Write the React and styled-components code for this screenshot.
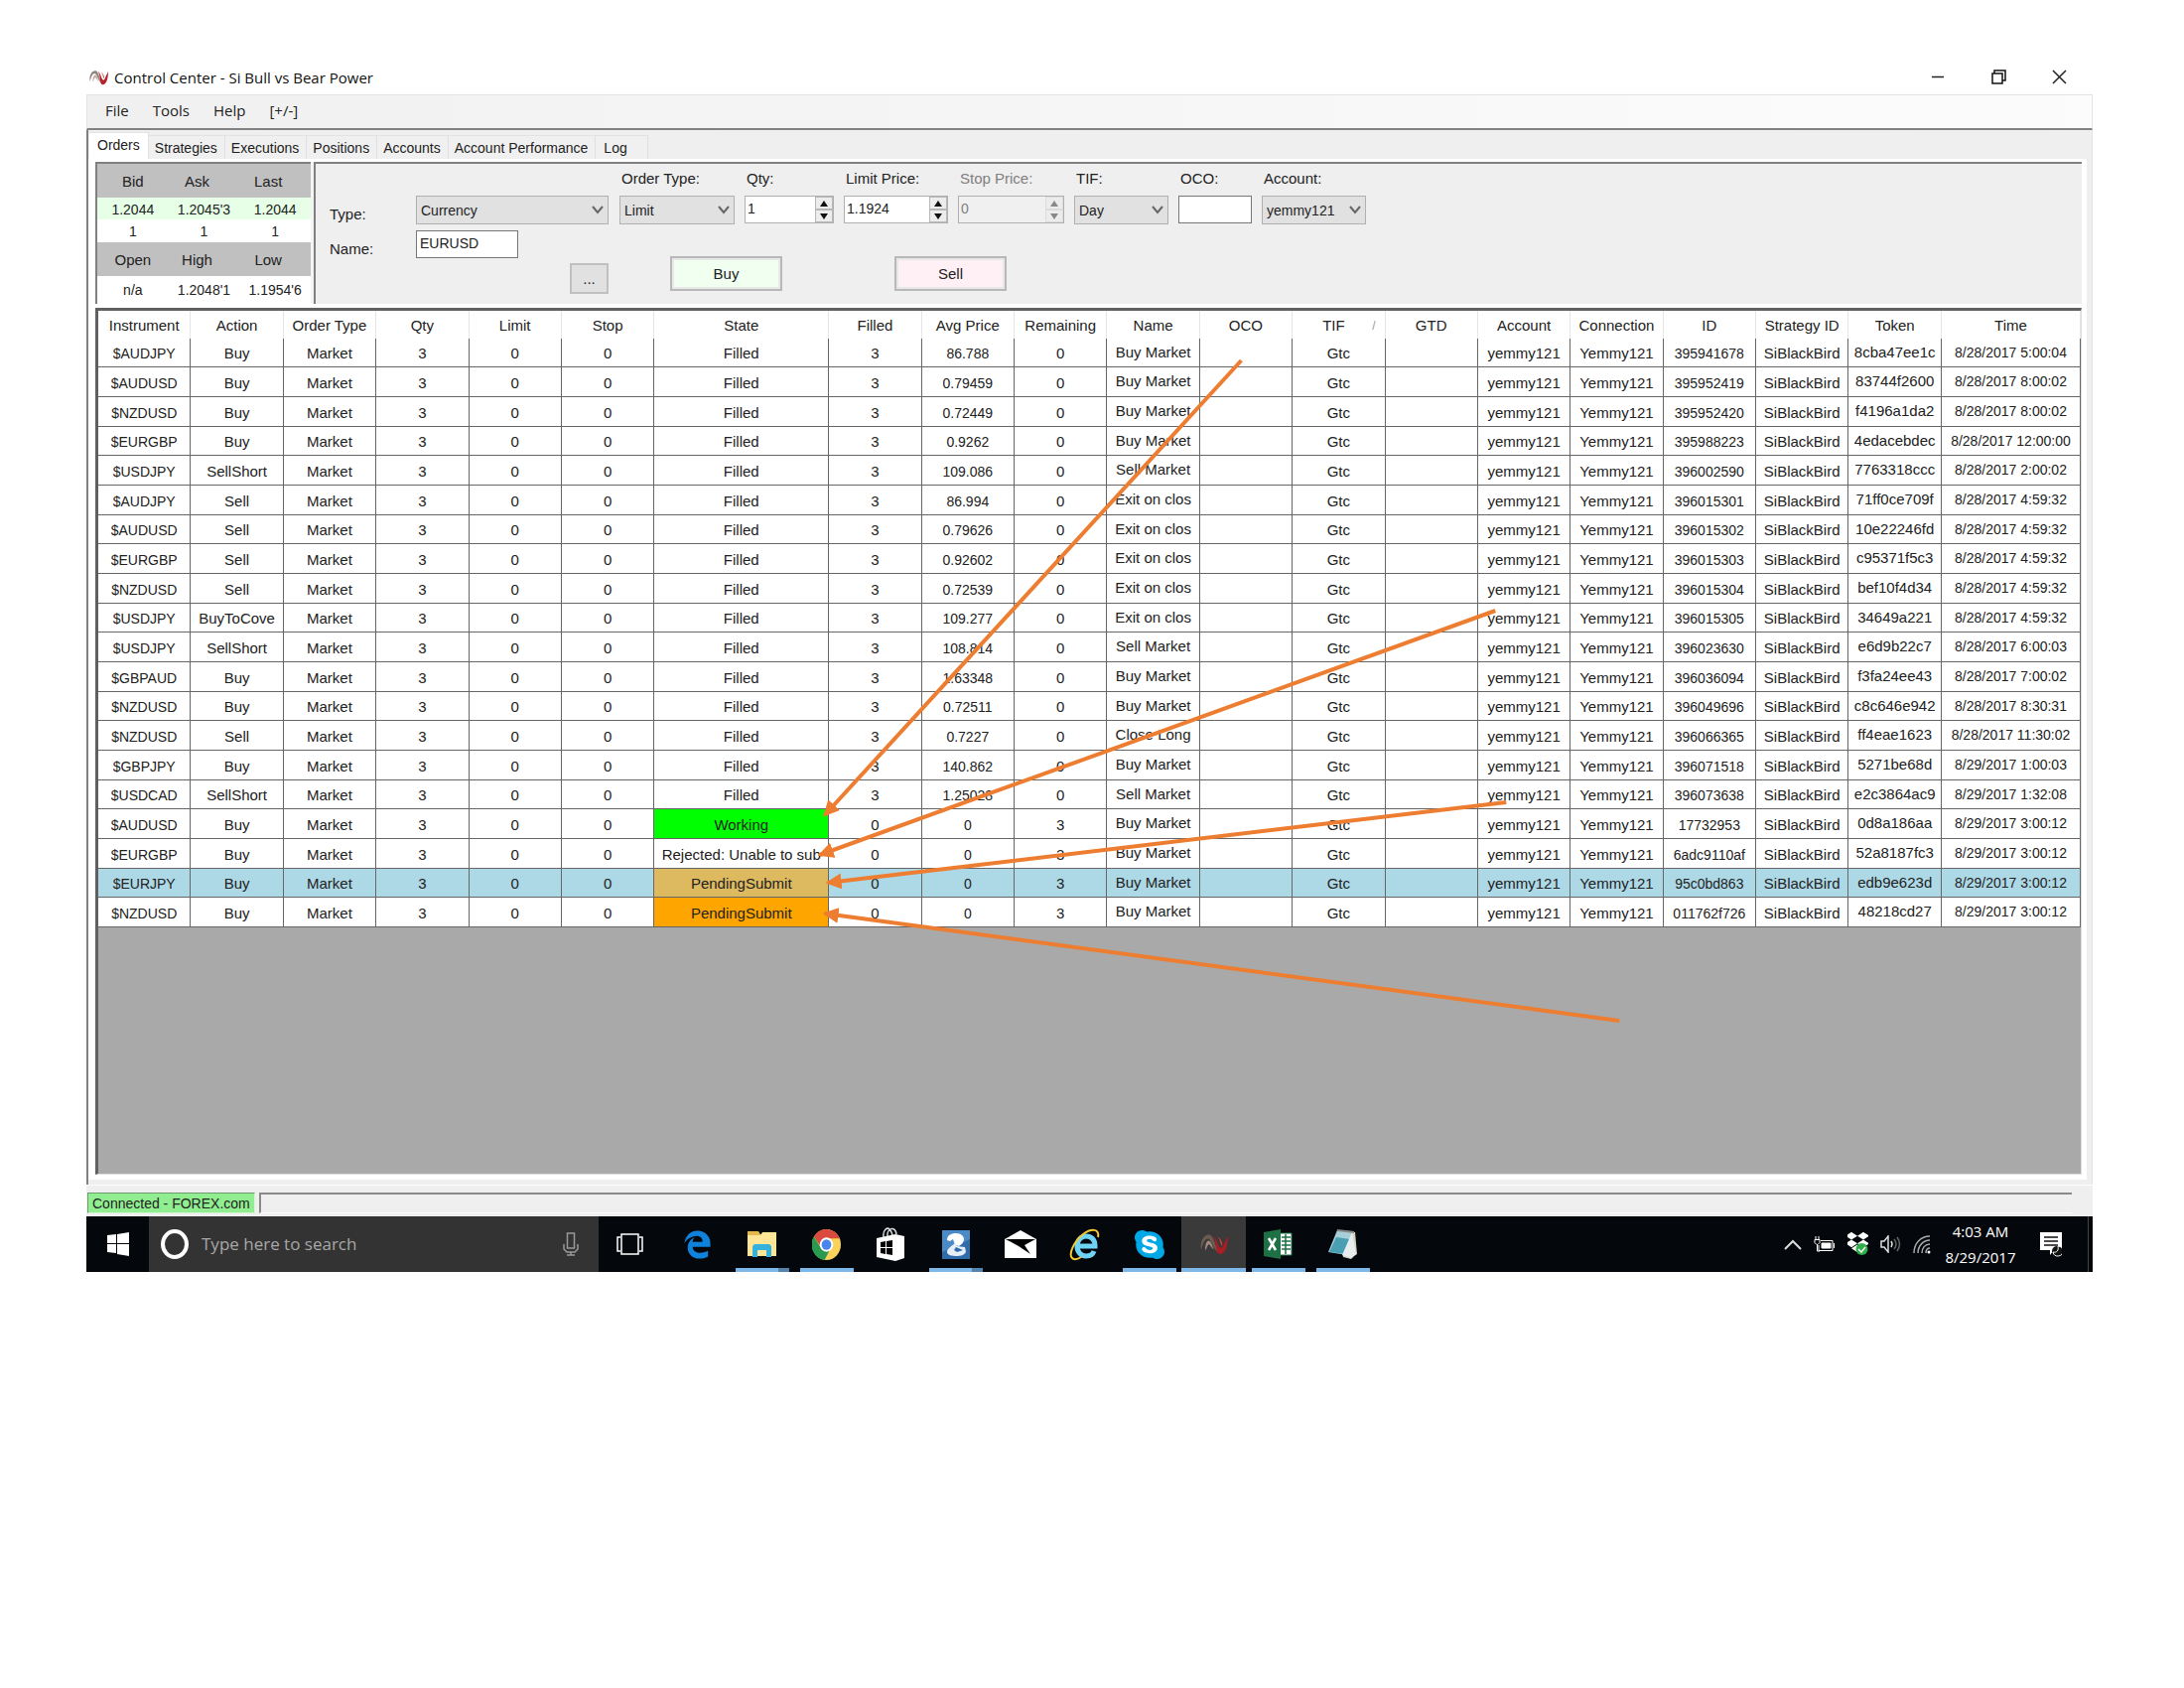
import React from "react";
import styled, { createGlobalStyle } from "styled-components";
import { FaDropbox, FaEdgeLegacy, FaSkype } from "react-icons/fa";

const tabs = ["Orders", "Strategies", "Executions", "Positions", "Accounts", "Account Performance", "Log"];

const columns = [
  "Instrument", "Action", "Order Type", "Qty", "Limit", "Stop", "State", "Filled", "Avg Price", "Remaining",
  "Name", "OCO", "TIF", "GTD", "Account", "Connection", "ID", "Strategy ID", "Token", "Time",
];

// instrument, action, state, filled, avg price, remaining, name, id, token, time
const orders = [
  ["$AUDJPY", "Buy", "Filled", 3, "86.788", 0, "Buy Market", "395941678", "8cba47ee1c", "8/28/2017 5:00:04"],
  ["$AUDUSD", "Buy", "Filled", 3, "0.79459", 0, "Buy Market", "395952419", "83744f2600", "8/28/2017 8:00:02"],
  ["$NZDUSD", "Buy", "Filled", 3, "0.72449", 0, "Buy Market", "395952420", "f4196a1da2", "8/28/2017 8:00:02"],
  ["$EURGBP", "Buy", "Filled", 3, "0.9262", 0, "Buy Market", "395988223", "4edacebdec", "8/28/2017 12:00:00"],
  ["$USDJPY", "SellShort", "Filled", 3, "109.086", 0, "Sell Market", "396002590", "7763318ccc", "8/28/2017 2:00:02"],
  ["$AUDJPY", "Sell", "Filled", 3, "86.994", 0, "Exit on clos", "396015301", "71ff0ce709f", "8/28/2017 4:59:32"],
  ["$AUDUSD", "Sell", "Filled", 3, "0.79626", 0, "Exit on clos", "396015302", "10e22246fd", "8/28/2017 4:59:32"],
  ["$EURGBP", "Sell", "Filled", 3, "0.92602", 0, "Exit on clos", "396015303", "c95371f5c3", "8/28/2017 4:59:32"],
  ["$NZDUSD", "Sell", "Filled", 3, "0.72539", 0, "Exit on clos", "396015304", "bef10f4d34", "8/28/2017 4:59:32"],
  ["$USDJPY", "BuyToCove", "Filled", 3, "109.277", 0, "Exit on clos", "396015305", "34649a221", "8/28/2017 4:59:32"],
  ["$USDJPY", "SellShort", "Filled", 3, "108.814", 0, "Sell Market", "396023630", "e6d9b22c7", "8/28/2017 6:00:03"],
  ["$GBPAUD", "Buy", "Filled", 3, "1.63348", 0, "Buy Market", "396036094", "f3fa24ee43", "8/28/2017 7:00:02"],
  ["$NZDUSD", "Buy", "Filled", 3, "0.72511", 0, "Buy Market", "396049696", "c8c646e942", "8/28/2017 8:30:31"],
  ["$NZDUSD", "Sell", "Filled", 3, "0.7227", 0, "Close Long", "396066365", "ff4eae1623", "8/28/2017 11:30:02"],
  ["$GBPJPY", "Buy", "Filled", 3, "140.862", 0, "Buy Market", "396071518", "5271be68d", "8/29/2017 1:00:03"],
  ["$USDCAD", "SellShort", "Filled", 3, "1.25028", 0, "Sell Market", "396073638", "e2c3864ac9", "8/29/2017 1:32:08"],
  ["$AUDUSD", "Buy", "Working", 0, "0", 3, "Buy Market", "17732953", "0d8a186aa", "8/29/2017 3:00:12"],
  ["$EURGBP", "Buy", "Rejected: Unable to sub", 0, "0", 3, "Buy Market", "6adc9110af", "52a8187fc3", "8/29/2017 3:00:12"],
  ["$EURJPY", "Buy", "PendingSubmit", 0, "0", 3, "Buy Market", "95c0bd863", "edb9e623d", "8/29/2017 3:00:12"],
  ["$NZDUSD", "Buy", "PendingSubmit", 0, "0", 3, "Buy Market", "011762f726", "48218cd27", "8/29/2017 3:00:12"],
];

const SELECTED = 18;

const stateColor = (state, selected) => {
  if (state === "Working") return "#00ff00";
  if (state === "PendingSubmit") return selected ? "#ddb960" : "#ffa500";
  return "transparent";
};

const arrows = [
  [1152, 50, 732, 508],
  [1408, 302, 727, 548],
  [1419, 495, 735, 576],
  [1533, 715, 732, 607],
];

function NinjaLogo({ size, height, dim }) {
  return (
    <svg width={size} height={height} viewBox="0 0 28 24" preserveAspectRatio="none">
      <path d="M1 18C-1 8 5 0 10 2c4 2 5 12 9 20C13 18 11 6 8 6c-4 0-5 6-7 12z" fill={dim ? "#6b5a50" : "#8d8580"} />
      <path d="M5 19C5 9 8 7 10 9c2 2 2 6 4 9C11 16 10 13 9 12c-2 1-2 4-4 7z" fill={dim ? "#a08c7e" : "#c9a9a2"} />
      <path d="M13 3c4 2 5 13 8 13c2 0 3-5 7-13C28 14 25 23 20 23c-5 0-3-13-7-20z" fill={dim ? "#a81e22" : "#b8202a"} />
      <path d="M16 3c4 1 4 10 6 11c1-3-1-7-3-9z" fill={dim ? "#c9403f" : "#d96a6c"} />
    </svg>
  );
}

function Select({ id, value, width }) {
  return (
    <SelectWrap $width={width}>
      <SelectControl id={id} defaultValue={value}>
        <option>{value}</option>
      </SelectControl>
      <Chevron width="12" height="9" viewBox="0 0 12 9">
        <path d="M1 1l5 6 5-6" fill="none" stroke="#666" strokeWidth="2" />
      </Chevron>
    </SelectWrap>
  );
}

function Spinner({ id, value, width, disabled }) {
  return (
    <SpinWrap $width={width} $disabled={disabled}>
      <SpinInput id={id} defaultValue={value} disabled={disabled} />
      <SpinButtons>
        <SpinButton type="button" aria-label="Increase" disabled={disabled}>
          <svg width="8" height="6" viewBox="0 0 8 6"><path d="M4 0l4 6H0z" fill="currentColor" /></svg>
        </SpinButton>
        <SpinButton type="button" aria-label="Decrease" disabled={disabled}>
          <svg width="8" height="6" viewBox="0 0 8 6"><path d="M4 6l4-6H0z" fill="currentColor" /></svg>
        </SpinButton>
      </SpinButtons>
    </SpinWrap>
  );
}

function QuotePanel() {
  return (
    <QuoteTable>
      <tbody>
        <QuoteHead><th>Bid</th><th>Ask</th><th>Last</th></QuoteHead>
        <QuoteRow $live><td>1.2044</td><td>1.2045'3</td><td>1.2044</td></QuoteRow>
        <QuoteRow><td>1</td><td>1</td><td>1</td></QuoteRow>
        <QuoteHead><th>Open</th><th>High</th><th>Low</th></QuoteHead>
        <QuoteRow $tall><td>n/a</td><td>1.2048'1</td><td>1.1954'6</td></QuoteRow>
      </tbody>
    </QuoteTable>
  );
}

function OrderEntry() {
  return (
    <EntryPanel>
      <SymbolForm>
        <SymbolLabel htmlFor="type">Type:</SymbolLabel>
        <Select id="type" value="Currency" width={194} />
        <SymbolLabel htmlFor="name">Name:</SymbolLabel>
        <TextInput id="name" defaultValue="EURUSD" $width={103} />
        <MoreButton type="button">...</MoreButton>
      </SymbolForm>
      <TicketForm>
        <FieldRow>
          <Field><FieldLabel htmlFor="orderType">Order Type:</FieldLabel><Select id="orderType" value="Limit" width={116} /></Field>
          <Field><FieldLabel htmlFor="qty">Qty:</FieldLabel><Spinner id="qty" value="1" width={90} /></Field>
          <Field><FieldLabel htmlFor="limitPrice">Limit Price:</FieldLabel><Spinner id="limitPrice" value="1.1924" width={105} /></Field>
          <Field><FieldLabel htmlFor="stopPrice" $disabled>Stop Price:</FieldLabel><Spinner id="stopPrice" value="0" width={107} disabled /></Field>
          <Field><FieldLabel htmlFor="tif">TIF:</FieldLabel><Select id="tif" value="Day" width={95} /></Field>
          <Field><FieldLabel htmlFor="oco">OCO:</FieldLabel><TextInput id="oco" $width={74} /></Field>
          <Field><FieldLabel htmlFor="account">Account:</FieldLabel><Select id="account" value="yemmy121" width={105} /></Field>
        </FieldRow>
        <TradeButtons>
          <TradeButton type="button" $color="#f0fff0">Buy</TradeButton>
          <TradeButton type="button" $color="#fff0f5">Sell</TradeButton>
        </TradeButtons>
      </TicketForm>
    </EntryPanel>
  );
}

function OrdersGrid() {
  return (
    <GridPane>
      <GridTable>
        <colgroup>
          {columns.map((name) => <GridCol key={name} $name={name} />)}
        </colgroup>
        <thead>
          <tr>
            {columns.map((name) => (
              <HeadCell key={name}>
                {name === "TIF" ? <SortHead><span>TIF</span><SortMark>/</SortMark></SortHead> : name}
              </HeadCell>
            ))}
          </tr>
        </thead>
        <tbody>
          {orders.map((o, i) => {
            const [instrument, action, state, filled, avg, remaining, name, id, token, time] = o;
            const selected = i === SELECTED;
            return (
              <Row key={i} $selected={selected}>
                <Cell $dense>{instrument}</Cell>
                <Cell>{action}</Cell>
                <Cell>Market</Cell>
                <Cell>3</Cell>
                <Cell>0</Cell>
                <Cell>0</Cell>
                <StateCell $color={stateColor(state, selected)}>{state}</StateCell>
                <Cell>{filled}</Cell>
                <Cell $dense>{avg}</Cell>
                <Cell>{remaining}</Cell>
                <Cell $raised>{name}</Cell>
                <Cell />
                <Cell>Gtc</Cell>
                <Cell />
                <Cell>yemmy121</Cell>
                <Cell>Yemmy121</Cell>
                <Cell $dense>{id}</Cell>
                <Cell>SiBlackBird</Cell>
                <Cell $raised>{token}</Cell>
                <Cell $raised $dense>{time}</Cell>
              </Row>
            );
          })}
        </tbody>
      </GridTable>
      <Annotations viewBox="0 0 1998 869" preserveAspectRatio="none">
        <defs>
          <marker id="head" viewBox="0 0 16 16" refX="14" refY="8" markerWidth="16" markerHeight="16" markerUnits="userSpaceOnUse" orient="auto">
            <path d="M0 0l16 8-16 8z" fill="#ed7d31" />
          </marker>
        </defs>
        {arrows.map(([x1, y1, x2, y2]) => (
          <line key={y1} x1={x1} y1={y1} x2={x2} y2={y2} stroke="#ed7d31" strokeWidth="4" markerEnd="url(#head)" />
        ))}
      </Annotations>
    </GridPane>
  );
}

const StoreIcon = () => (
  <svg width="29" height="34" viewBox="0 0 29 34">
    <path d="M7 10C6 2 11 0 13 2s3 4 3 8M11 9C10 1 19-2 20 7" fill="none" stroke="#ddd" strokeWidth="1.5" />
    <path d="M0 11l19-4v27L0 30zM19 7l9 2v22l-9 3z" fill="#fff" />
    <path d="M4 15l5-1v6H4zM10 14l6-1v7h-6zM4 21h5v6l-5-1zM10 21h6v7l-6-1z" fill="#000" />
  </svg>
);

const ExplorerIcon = () => (
  <svg width="29" height="28" viewBox="0 0 29 28">
    <path d="M0 1h11l2 3h16v22H0z" fill="#e3b94c" />
    <path d="M0 5h13l2-3h14v24H0z" fill="#ffe596" />
    <path d="M5 27V16l2-2h15l2 2v11h-5v-7h-9v7z" fill="#35b1de" />
  </svg>
);

const ChromeIcon = () => (
  <svg width="29" height="31" viewBox="0 0 30 30" preserveAspectRatio="none">
    <circle cx="15" cy="15" r="15" fill="#fbd25a" />
    <path d="M15 0a15 15 0 0 1 14 9H15l-6 8L2 7A15 15 0 0 1 15 0z" fill="#db4a3e" />
    <path d="M2 7l7 11 9 3-5 9A15 15 0 0 1 2 7z" fill="#2b9a50" />
    <circle cx="15" cy="15" r="7" fill="#fff" />
    <circle cx="15" cy="15" r="5" fill="#4a86ee" />
  </svg>
);

const ZIcon = () => (
  <svg width="28" height="29" viewBox="0 0 28 29">
    <rect width="28" height="29" fill="#2f6cab" />
    <path d="M0 0h28v9L0 22z" fill="#4a8ac6" />
    <path d="M5 10C5 5 9 3 14 3c5 0 8 3 8 6 0 3-2 5-5 7l-4-1-2-6-3 2z" fill="#fff" />
    <path d="M13 13l2 3 8 1 1 5c-2 3-5 4-9 4-5 0-10-1-10-4 0-4 5-6 8-9z" fill="#e6eef8" />
    <path d="M14 17l7 3-6 2-3-2z" fill="#2f6cab" />
  </svg>
);

const MailIcon = () => (
  <svg width="32" height="28" viewBox="0 0 32 28">
    <path d="M0 9L16 0l16 9v19H0z" fill="#fff" />
    <path d="M1 9h30l-11 6 6 9-12-8z" fill="#000" />
  </svg>
);

const IeIcon = () => (
  <svg width="31" height="33" viewBox="0 0 31 33" fill="none">
    <path d="M9 18h17c0-7-4-10-9-10S8 12 8 18s4 10 9 10c4 0 7-2 8-5" stroke="#6fd3f5" strokeWidth="5" />
    <path d="M29 9c2-9-7-9-15-3C5 13-1 26 3 30c2 2 6 1 9-1" stroke="#f5c931" strokeWidth="2" />
  </svg>
);

const SkypeIcon = () => (
  <svg width="30" height="33" viewBox="0 0 28 32" preserveAspectRatio="none">
    <circle cx="14" cy="16" r="10" fill="#fff" />
    <FaSkype size={32} x="-2" y="0" color="#00a8e6" />
  </svg>
);

const ExcelIcon = () => (
  <svg width="29" height="30" viewBox="0 0 29 30">
    <path d="M16 4h12v22H16z" fill="#fff" stroke="#1e7145" />
    <path d="M18 8h9M18 12h9M18 16h9M18 20h9M22 5v20" stroke="#1e7145" strokeWidth="1.500" />
    <path d="M0 3l17-3v30L0 27z" fill="#1e7145" />
    <path d="M5 9l7 12M12 9L5 21" stroke="#fff" strokeWidth="2.500" />
  </svg>
);

const NotepadIcon = () => (
  <svg width="30" height="30" viewBox="0 0 30 30">
    <path d="M9 1l18 2 2 22-3 2-3 3-8-2z" fill="#d8d2c0" />
    <path d="M9 1l15 1-5 24L0 23z" fill="#a6cfd9" />
    <path d="M8 8l14 2-4 15L1 23z" fill="#4b9fb3" />
    <path d="M24 3l4 22-5 4-9-3z" fill="#e8edee" />
    <path d="M9 1l17 2" stroke="#888" strokeWidth="2" />
  </svg>
);

const taskItems = [
  { name: "Edge", icon: <FaEdgeLegacy size={29} color="#0f82dc" /> },
  { name: "File Explorer", icon: <ExplorerIcon />, open: true, stacked: true },
  { name: "Chrome", icon: <ChromeIcon />, open: true },
  { name: "Store", icon: <StoreIcon /> },
  { name: "Trader", icon: <ZIcon />, open: true, stacked: true },
  { name: "Mail", icon: <MailIcon /> },
  { name: "Internet Explorer", icon: <IeIcon /> },
  { name: "Skype", icon: <SkypeIcon />, open: true },
  { name: "Control Center", icon: <NinjaLogo size={28} height={22} dim />, open: true, active: true },
  { name: "Excel", icon: <ExcelIcon />, open: true },
  { name: "Notepad", icon: <NotepadIcon />, open: true },
];

function Taskbar() {
  return (
    <TaskbarBar>
      <StartButton aria-label="Start">
        <svg width="22" height="24" viewBox="0 0 22 24" fill="#fff">
          <path d="M0 3l9-1v9H0zM10 2l12-2v11H10zM0 12h9v9l-9-1zM10 12h12v12l-12-2z" />
        </svg>
      </StartButton>
      <SearchBox>
        <svg width="30" height="32" viewBox="0 0 30 32">
          <ellipse cx="15" cy="16" rx="12" ry="13" fill="none" stroke="#fff" strokeWidth="4" />
        </svg>
        <SearchInput placeholder="Type here to search" aria-label="Search" />
        <svg width="16" height="24" viewBox="0 0 16 24" fill="none" stroke="#999" strokeWidth="1.500">
          <path d="M4.500 1h7v15h-7zM1 12v5l3 3h8l3-3v-5M8 20v3M4 23h8" />
        </svg>
      </SearchBox>
      <StartButton aria-label="Task view">
        <svg width="27" height="22" viewBox="0 0 27 22" fill="none" stroke="#fff" strokeWidth="1.500">
          <path d="M5 1h17v20H5zM4 4H1v14h3M23 4h3v14h-3" />
        </svg>
      </StartButton>
      <TaskList>
        {taskItems.map((t) => (
          <TaskItem key={t.name} aria-label={t.name} $open={t.open} $active={t.active} $stacked={t.stacked}>
            {t.icon}
          </TaskItem>
        ))}
      </TaskList>
      <Tray>
        <svg width="18" height="11" viewBox="0 0 18 11" fill="none" stroke="#ddd" strokeWidth="2"><path d="M1 10l8-8 8 8" /></svg>
        <svg width="22" height="16" viewBox="0 0 22 16" fill="none" stroke="#fff">
          <path d="M7 4.500h12v10H5V9M20.500 7v5M1 3.500h5v3l-2 2H3l-2-2zM2 3V0M5 3V0M3.500 9v6H6" />
          <path d="M8 7h9v5H8z" fill="#fff" />
        </svg>
        <svg width="21" height="24" viewBox="0 0 21 24">
          <FaDropbox size={24} x="-2" y="-2" color="#fff" />
          <circle cx="14.500" cy="17" r="6" fill="#2fae4a" />
          <path d="M11 17l3 3 4-5" fill="none" stroke="#fff" strokeWidth="1.500" />
        </svg>
        <svg width="21" height="18" viewBox="0 0 21 18" fill="none" stroke="#ddd">
          <path d="M1 6h3l4-5v16l-4-5H1z" strokeWidth="1.500" />
          <path d="M11 6q2 3 0 6" strokeWidth="1.500" />
          <path d="M14 4q4 5 0 10M17 2q5 7 0 14" stroke="#666" strokeWidth="1.500" />
        </svg>
        <svg width="18" height="20" viewBox="0 0 18 20" fill="none" stroke="#aaa" strokeWidth="1.500">
          <path d="M1 19C1 9 8 2 17 2M5 19C5 12 10 6 17 6M9 19c0-5 3-9 8-9M13 19c0-3 1-5 4-5" />
          <circle cx="16" cy="18" r="1.500" fill="#fff" stroke="none" />
        </svg>
        <Clock><span>4:03 AM</span><span>8/29/2017</span></Clock>
        <svg width="22" height="25" viewBox="0 0 22 25">
          <path d="M0 0h22v18h-8l-4 5v-5H0z" fill="#fff" />
          <path d="M4 5h14M4 9h14M4 13h14" stroke="#111" strokeWidth="1.500" />
          <circle cx="17" cy="19" r="5" fill="#111" />
          <path d="M18 14a5 5 0 1 1-5 6c4 1 6-2 5-6z" fill="#111" stroke="#fff" />
        </svg>
      </Tray>
    </TaskbarBar>
  );
}

function App() {
  return (
    <Page>
      <GlobalStyle />
      <TitleBar>
        <NinjaLogo size={19} height={16} />
        <Title>Control Center - Si Bull vs Bear Power</Title>
        <WindowButtons>
          <WindowButton aria-label="Minimize">
            <svg width="15" height="15" viewBox="0 0 15 15"><path d="M1 7.500h12" stroke="#222" strokeWidth="1.500" /></svg>
          </WindowButton>
          <WindowButton aria-label="Restore">
            <svg width="15" height="15" viewBox="0 0 15 15" fill="none" stroke="#111" strokeWidth="1.500"><path d="M1 4h10v10H1zM3 4V1h11v10h-3" /></svg>
          </WindowButton>
          <WindowButton aria-label="Close">
            <svg width="15" height="15" viewBox="0 0 15 15"><path d="M1 1l13 13M14 1L1 14" stroke="#222" strokeWidth="1.500" /></svg>
          </WindowButton>
        </WindowButtons>
      </TitleBar>
      <MenuBar>
        <MenuItem>File</MenuItem>
        <MenuItem>Tools</MenuItem>
        <MenuItem>Help</MenuItem>
        <MenuItem>[+/-]</MenuItem>
      </MenuBar>
      <Client>
        <TabStrip role="tablist">
          {tabs.map((t, i) => (
            <Tab key={t} role="tab" aria-selected={i === 0} $active={i === 0} $last={i === tabs.length - 1}>{t}</Tab>
          ))}
        </TabStrip>
        <TabPage>
          <TopPanels>
            <QuotePanel />
            <OrderEntry />
          </TopPanels>
          <OrdersGrid />
        </TabPage>
      </Client>
      <StatusBar>
        <Connected>Connected - FOREX.com</Connected>
        <StatusPane />
      </StatusBar>
      <Taskbar />
    </Page>
  );
}

const uiFont = `"Liberation Sans", Arial, sans-serif`;
const shellFont = `"Open Sans", "Noto Sans", sans-serif`;

const GlobalStyle = createGlobalStyle`
  * {
    box-sizing: border-box;
  }
  body {
    margin: 0;
    background: #ffffff;
    color: #222222;
    font: 15px/20px ${uiFont};
  }
  button, input, select {
    font: inherit;
    color: inherit;
    margin: 0;
  }
`;

const Page = styled.div`
  padding: 60px 92px 60px 87px;
`;

const TitleBar = styled.header`
  display: flex;
  align-items: center;
  gap: 6px;
  height: 35px;
  padding: 0 26px 0 3px;
`;

const Title = styled.h1`
  margin: 0;
  font: 400 15px/20px ${shellFont};
  color: #111111;
`;

const WindowButtons = styled.div`
  display: flex;
  gap: 46px;
  margin-left: auto;
`;

const WindowButton = styled.button`
  display: flex;
  padding: 0;
  border: 0;
  background: none;
`;

const MenuBar = styled.nav`
  display: flex;
  align-items: center;
  gap: 24px;
  height: 36px;
  padding: 0 18px 3px;
  background: linear-gradient(90deg, #f0f0f0, #fcfcfc);
  border: 1px solid #e3e3e3;
  border-bottom: 2px solid #828282;
`;

const MenuItem = styled.button`
  padding: 0;
  border: 0;
  background: none;
  font: 400 15px/20px ${shellFont};
`;

const Client = styled.main`
  padding: 2px 5px 5px 0;
  background: #efefef;
  border-left: 2px solid #808080;
  border-right: 1px solid #e3e3e3;
`;

const TabStrip = styled.div`
  display: flex;
  align-items: flex-end;
  height: 27px;
  padding-left: 1px;
`;

const Tab = styled.button`
  height: ${({ $active }) => ($active ? "27px" : "24px")};
  padding: ${({ $active, $last }) => ($active ? "0 8px 3px" : $last ? "0 20px 0 8px" : "0 7px 0 6px")};
  border: 0;
  border-right: 1px solid #e0e0e0;
  border-top: 1px solid #e3e3e3;
  background: ${({ $active }) => ($active ? "#ffffff" : "#f0f0f0")};
  font-size: 14px;
  white-space: nowrap;
`;

const TabPage = styled.div`
  padding: 3px 5px 5px 7px;
  background: #ffffff;
`;

const TopPanels = styled.div`
  display: flex;
  gap: 3px;
  margin-bottom: 4px;
  background: #f4f4f4;
`;

const QuoteTable = styled.table`
  flex: none;
  width: 217px;
  height: 143px;
  table-layout: fixed;
  border-spacing: 0;
  border-top: 2px solid #808080;
  border-left: 2px solid #808080;
  background: #ffffff;
  text-align: center;
  th {
    padding: 2px 0 0;
    font-weight: 400;
  }
  td {
    padding: 1px 0 0;
    font-size: 14px;
  }
`;

const QuoteHead = styled.tr`
  height: 34px;
  background: #c0c0c0;
  th:nth-child(n + 2) {
    padding-right: 14px;
  }
`;

const QuoteRow = styled.tr`
  height: ${({ $tall }) => ($tall ? "28px" : "22px")};
  background: ${({ $live }) => ($live ? "#e6ffe6" : "#ffffff")};
`;

const EntryPanel = styled.form`
  display: flex;
  flex: 1;
  gap: 11px;
  height: 143px;
  padding: 5px 14px 9px;
  background: #efefef;
  border-top: 2px solid #808080;
  border-left: 2px solid #808080;
`;

const SymbolForm = styled.div`
  display: grid;
  grid-template-columns: 87px 194px;
  grid-template-rows: 29px 27px 31px;
  row-gap: 6px;
  align-content: start;
  padding-top: 27px;
`;

const SymbolLabel = styled.label`
  padding-top: 9px;
`;

const TicketForm = styled.div`
  display: flex;
  flex-direction: column;
  gap: 32px;
`;

const FieldRow = styled.div`
  display: flex;
  gap: 10px;
`;

const Field = styled.div`
  display: flex;
  flex-direction: column;
  gap: 7px;
`;

const FieldLabel = styled.label`
  padding-left: 2px;
  color: ${({ $disabled }) => ($disabled ? "#808080" : "#222222")};
`;

const SelectWrap = styled.div`
  display: grid;
  width: ${({ $width }) => $width}px;
  align-items: center;
`;

const SelectControl = styled.select`
  grid-area: 1 / 1;
  appearance: none;
  width: 100%;
  height: 29px;
  padding: 0 4px;
  border: 1px solid #b0b0b0;
  border-radius: 0;
  background: #e1e1e1;
  font-size: 14px;
  opacity: 1;
`;

const Chevron = styled.svg`
  grid-area: 1 / 1;
  justify-self: end;
  margin-right: 5px;
  pointer-events: none;
`;

const TextInput = styled.input`
  width: ${({ $width }) => $width}px;
  height: 28px;
  padding: 0 3px 3px;
  border: 1px solid #777777;
  background: #ffffff;
  font-size: 14px;
`;

const SpinWrap = styled.div`
  display: flex;
  width: ${({ $width }) => $width}px;
  height: 28px;
  border: 1px solid #b0b0b0;
  background: ${({ $disabled }) => ($disabled ? "#f0f0f0" : "#ffffff")};
`;

const SpinInput = styled.input`
  flex: 1;
  min-width: 0;
  padding: 0 2px 3px;
  border: 0;
  background: transparent;
  font-size: 14px;
  &:disabled {
    color: #808080;
  }
`;

const SpinButtons = styled.div`
  display: flex;
  flex-direction: column;
  width: 18px;
`;

const SpinButton = styled.button`
  display: flex;
  flex: 1;
  align-items: center;
  justify-content: center;
  padding: 0;
  border: 1px solid #b8b8b8;
  background: #ececec;
  color: #111111;
  &:disabled {
    border-color: #dcdcdc;
    color: #888888;
  }
`;

const MoreButton = styled.button`
  grid-column: 2;
  justify-self: end;
  width: 39px;
  border: 2px solid #c0c0c0;
  background: #e1e1e1;
`;

const TradeButtons = styled.div`
  display: flex;
  gap: 113px;
  padding-left: 51px;
`;

const TradeButton = styled.button`
  width: 113px;
  height: 35px;
  border: 2px solid #b8b8b8;
  box-shadow: inset 0 0 0 2px #e8e8e8;
  background: ${({ $color }) => $color};
`;

const GridPane = styled.section`
  position: relative;
  min-height: 873px;
  background: #a9a9a9;
  border-top: 3px solid #606060;
  border-left: 3px solid #606060;
  border-right: 1px solid #dddddd;
  border-bottom: 1px solid #dddddd;
`;

const GridTable = styled.table`
  width: 100%;
  table-layout: fixed;
  border-spacing: 0;
  background: #ffffff;
  text-align: center;
`;

const GridCol = styled.col`
  width: ${({ $name }) => ($name === "State" ? "176px" : $name === "Time" ? "140px" : "auto")};
`;

const HeadCell = styled.th`
  height: 28px;
  padding: 2px 0 0;
  border-right: 1px solid #e5e5e5;
  font-weight: 400;
`;

const SortHead = styled.span`
  display: flex;
  justify-content: space-between;
  padding: 0 9px 0 30px;
`;

const SortMark = styled.span`
  color: #999999;
  font-size: 12px;
`;

const Cell = styled.td`
  padding: ${({ $raised }) => ($raised ? "0 0 1px" : "2px 0 0")};
  border-right: 1px solid #666666;
  border-bottom: 1px solid #666666;
  font-size: ${({ $dense }) => ($dense ? "14px" : "15px")};
  white-space: nowrap;
`;

const StateCell = styled(Cell)`
  background: ${({ $color }) => $color};
`;

const Row = styled.tr`
  height: 30px;
  background: ${({ $selected }) => ($selected ? "#add8e6" : "#ffffff")};
  &:nth-child(3n + 1) {
    height: 29px;
  }
`;

const Annotations = styled.svg`
  position: absolute;
  inset: 0;
  width: 100%;
  height: 100%;
  pointer-events: none;
`;

const StatusBar = styled.footer`
  display: flex;
  gap: 4px;
  height: 32px;
  padding: 7px 21px 3px 1px;
  background: #efefef;
  border-top: 1px solid #ffffff;
`;

const Connected = styled.div`
  padding: 0 4px;
  border: 1px solid #6f9a6f;
  border-right-color: #d5f5d5;
  border-bottom-color: #d5f5d5;
  background: #90ee90;
  font-size: 14px;
  white-space: nowrap;
`;

const StatusPane = styled.div`
  flex: 1;
  border-top: 2px solid #8a8a8a;
  border-left: 2px solid #8a8a8a;
  border-bottom: 1px solid #ffffff;
`;

const TaskbarBar = styled.div`
  display: flex;
  height: 56px;
  background: #04080c;
  color: #ffffff;
  font-family: ${shellFont};
`;

const StartButton = styled.button`
  display: flex;
  align-items: center;
  justify-content: center;
  width: 63px;
  padding: 0;
  border: 0;
  background: none;
`;

const SearchBox = styled.div`
  display: flex;
  align-items: center;
  gap: 12px;
  width: 453px;
  padding: 0 20px 0 11px;
  background: #333333;
`;

const SearchInput = styled.input`
  flex: 1;
  min-width: 0;
  padding: 0;
  border: 0;
  background: transparent;
  font-size: 17px;
  &::placeholder {
    color: #a8a8a8;
    opacity: 1;
  }
`;

const TaskList = styled.div`
  display: flex;
  margin-left: 4px;
`;

const TaskItem = styled.button`
  display: flex;
  align-items: center;
  justify-content: center;
  width: 65px;
  padding: 0;
  border: 0;
  background:
    linear-gradient(90deg, #7db8e8 ${({ $stacked }) => ($stacked ? "80%" : "100%")}, #5484ac 0)
      center bottom / ${({ $open, $active }) => ($active ? "65px" : $open ? "54px" : "0")} 4px no-repeat,
    ${({ $active }) => ($active ? "#3a3a3a" : "transparent")};
`;

const Tray = styled.div`
  display: flex;
  align-items: center;
  gap: 12px;
  margin-left: auto;
  padding-right: 26px;
  margin-right: 4px;
  border-right: 1px solid #444444;
`;

const Clock = styled.time`
  display: flex;
  flex-direction: column;
  align-items: center;
  width: 76px;
  margin-right: 10px;
  font-size: 15px;
  line-height: 26px;
`;

export default App;
